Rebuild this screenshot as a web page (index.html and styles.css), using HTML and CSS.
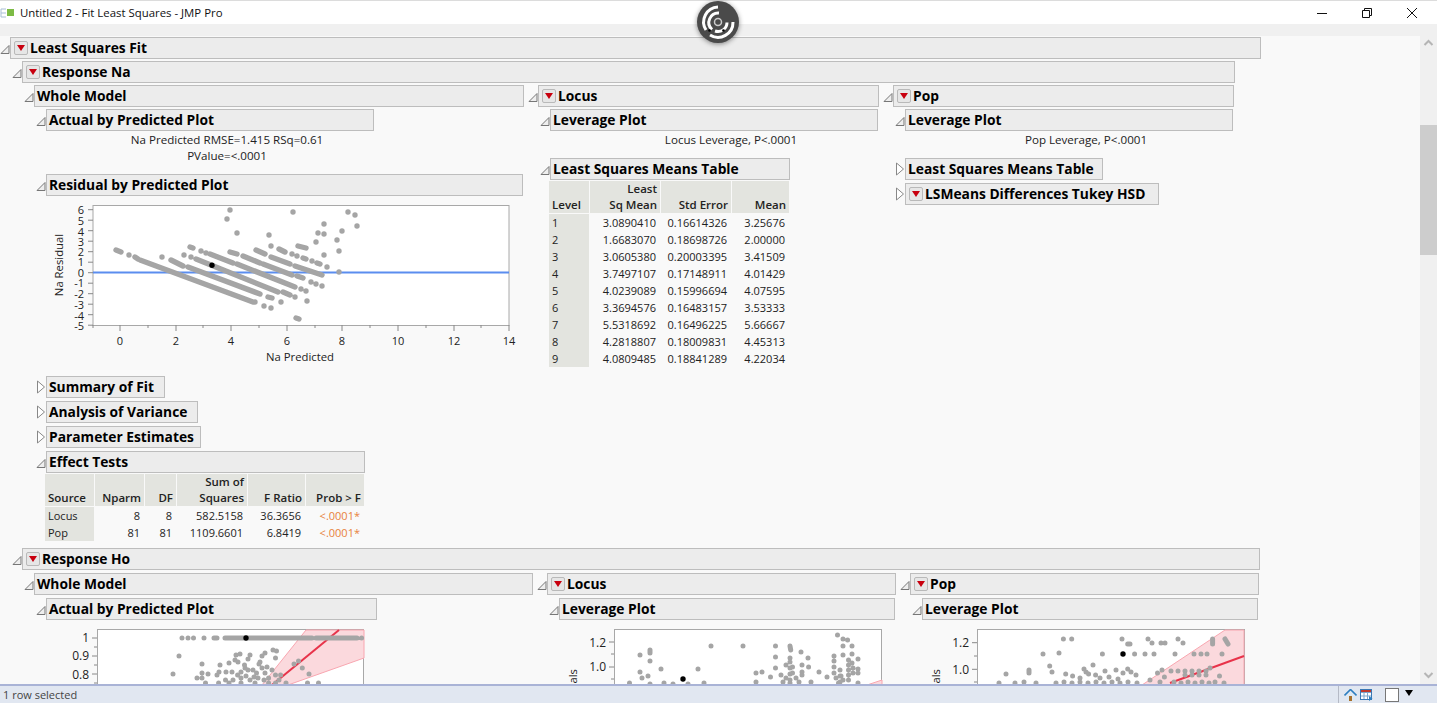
FILE: index.html
```html
<!DOCTYPE html>
<html lang="en">
<head>
    <meta charset="UTF-8">
    <meta name="viewport" content="width=device-width, initial-scale=1.0">
    <title>Untitled 2 - Fit Least Squares - JMP Pro</title>
    <link rel="stylesheet" href="styles.css">
</head>
<body>

    <svg class="defs" width="0" height="0">
        <symbol id="tw-open" viewBox="0 0 10 10">
            <path d="M1 9.5 L9 1.5 V9.5 Z" fill="#eee" stroke="#777"/>
        </symbol>
        <symbol id="tw-closed" viewBox="0 0 10 14">
            <path d="M1.5 1 L8.5 7 L1.5 13 Z" fill="#fff" stroke="#888"/>
        </symbol>
    </svg>

    <header class="titlebar">
        <svg class="app-icon" width="16" height="12" viewBox="0 0 16 12">
            <path d="M1 2h5M1 6h5M1 10h5M1 2v8" fill="none" stroke="#a9bfd6"/>
            <rect x="7" y="2" width="7" height="7" fill="#7dbb45"/>
        </svg>
        <span class="title-text">Untitled 2 - Fit Least Squares - JMP Pro</span>
        <div class="win-controls">
            <svg width="12" height="12" viewBox="0 0 12 12"><path d="M1 6.500h10" stroke="#111"/></svg>
            <svg width="12" height="12" viewBox="0 0 12 12"><path d="M1.500 3.500h7v7h-7zM3.500 3.500v-2h7v7h-2" fill="none" stroke="#111"/></svg>
            <svg width="12" height="12" viewBox="0 0 12 12"><path d="M1 1l10 10M11 1L1 11" stroke="#111"/></svg>
        </div>
    </header>
    <div class="toolstrip"></div>

    <!-- Floating recorder button -->
    <div class="recorder">
        <svg width="42" height="42" viewBox="0 0 42 42">
            <g fill="none" stroke="#fff" stroke-width="3">
                <path d="M21 6A15 15 0 0 0 9 29"/>
                <path d="M36 21A15 15 0 0 1 13 34"/>
                <path d="M22 12A9.500 9.500 0 0 0 15 28.500"/>
                <path d="M30 21.500A9 9 0 0 1 18 30"/>
            </g>
            <circle cx="21" cy="21" r="3.500" fill="none" stroke="#ccc" stroke-width="1.500"/>
            <circle cx="12.500" cy="29.500" r="1.300" fill="#000"/>
            <circle cx="26.500" cy="29.500" r="1.300" fill="#000"/>
        </svg>
    </div>

    <div class="main">
        <div class="report">

            <div class="node">
                <div class="hdr">
                    <svg class="twisty"><use href="#tw-open"/></svg>
                    <div class="box w-fit"><span class="menu"></span>Least Squares Fit</div>
                </div>
                <div class="body">

                    <!-- Response Na -->
                    <div class="node">
                        <div class="hdr">
                            <svg class="twisty"><use href="#tw-open"/></svg>
                            <div class="box w-resp-na"><span class="menu"></span>Response Na</div>
                        </div>
                        <div class="body columns">

                            <div class="node col-whole-na">
                                <div class="hdr">
                                    <svg class="twisty"><use href="#tw-open"/></svg>
                                    <div class="box w-full">Whole Model</div>
                                </div>
                                <div class="body">
                                    <div class="node">
                                        <div class="hdr">
                                            <svg class="twisty"><use href="#tw-open"/></svg>
                                            <div class="box w-328">Actual by Predicted Plot</div>
                                        </div>
                                        <div class="caption">Na Predicted RMSE=1.415 RSq=0.61<br>PValue=&lt;.0001</div>
                                    </div>
                                    <div class="node">
                                        <div class="hdr">
                                            <svg class="twisty"><use href="#tw-open"/></svg>
                                            <div class="box w-477">Residual by Predicted Plot</div>
                                        </div>
                                        <svg class="plot-residual" width="487" height="176" viewBox="36 198 487 176">
                                            <rect x="93" y="205.500" width="416" height="120" fill="#fff" stroke="#a8a8a8"/>
                                            <path class="ticks" d="M88 209.700h5M88 220.200h5M88 230.700h5M88 241.200h5M88 251.700h5M88 262.200h5M88 272.700h5M88 283.200h5M88 293.700h5M88 304.200h5M88 314.700h5M88 325.200h5M93 325v3M120 325v6M148 325v3M176 325v6M203 325v3M231 325v6M259 325v3M287 325v6M315 325v3M342 325v6M370 325v3M398 325v6M426 325v3M454 325v6M481 325v3M509 325v6"/>
                                            <g class="axis-num">
                                                <text x="84" y="213.500">6</text><text x="84" y="225">5</text><text x="84" y="235.500">4</text><text x="84" y="246">3</text><text x="84" y="256">2</text><text x="84" y="266">1</text><text x="84" y="277">0</text><text x="84" y="287">-1</text><text x="84" y="298">-2</text><text x="84" y="309">-3</text><text x="84" y="319.500">-4</text><text x="84" y="329.500">-5</text>
                                            </g>
                                            <g class="axis-num mid">
                                                <text x="120" y="345">0</text><text x="176" y="345">2</text><text x="231" y="345">4</text><text x="287" y="345">6</text><text x="342" y="345">8</text><text x="398" y="345">10</text><text x="454" y="345">12</text><text x="509" y="345">14</text>
                                            </g>
                                            <text class="axis-title mid" x="300" y="361">Na Predicted</text>
                                            <text class="axis-title mid" transform="translate(63 265) rotate(-90)">Na Residual</text>
                                            <path d="M93 272.500H509" stroke="#5b8def" stroke-width="2"/>
                                            <path class="dots" d="M230 210h0M227 219h0M237 233h0M293 212h0M348 212h0M355 215h0M357 226h0M324 224h0M318 233h0M324 234h0M342 231h0M337 240h0M316 242h0M269 235h0M271 246h0M339 251h0M324 255h0M327 267h0M339 272h0M322 286h0M311 282h0M316 284h0M307 301h0M281 302h0M271 308h0M264 306h0M296 318L299 319M295 297h0M116 250L121 252M129 255h0M135 257L138 259M140 260L253 302M255 302h0M162 257h0M171 260L183 266M188 267L260 294M268 297L272 298M184 255h0M191 257h0M196 259L278 292M283 292L290 295M190 247L193 248M201 251h0M206 253h0M210 254L233 263M237 264L295 287M301 289h0M306 291h0M230 252L237 254M243 256L260 263M263 264L292 275M297 276L303 278M256 250L265 254M271 257L290 264M295 266L322 275M279 249L285 252M292 254h0M297 256h0M303 258L306 259M312 261h0M317 263L320 264M298 246L306 248"/>
                                            <circle cx="212" cy="265.300" r="2.700" fill="#000"/>
                                        </svg>
                                    </div>
                                    <div class="node closed">
                                        <div class="hdr">
                                            <svg class="twisty tall"><use href="#tw-closed"/></svg>
                                            <div class="box w-119">Summary of Fit</div>
                                        </div>
                                    </div>
                                    <div class="node closed">
                                        <div class="hdr">
                                            <svg class="twisty tall"><use href="#tw-closed"/></svg>
                                            <div class="box w-152">Analysis of Variance</div>
                                        </div>
                                    </div>
                                    <div class="node closed">
                                        <div class="hdr">
                                            <svg class="twisty tall"><use href="#tw-closed"/></svg>
                                            <div class="box w-155">Parameter Estimates</div>
                                        </div>
                                    </div>
                                    <div class="node">
                                        <div class="hdr">
                                            <svg class="twisty"><use href="#tw-open"/></svg>
                                            <div class="box w-319">Effect Tests</div>
                                        </div>
                                        <table class="report-table effect">
                                            <thead>
                                                <tr><th>Source</th><th>Nparm</th><th>DF</th><th>Sum of<br>Squares</th><th>F Ratio</th><th>Prob &gt; F</th></tr>
                                            </thead>
                                            <tbody>
                                                <tr><th>Locus</th><td>8</td><td>8</td><td>582.5158</td><td>36.3656</td><td class="sig">&lt;.0001*</td></tr>
                                                <tr><th>Pop</th><td>81</td><td>81</td><td>1109.6601</td><td>6.8419</td><td class="sig">&lt;.0001*</td></tr>
                                            </tbody>
                                        </table>
                                    </div>
                                </div>
                            </div>

                            <div class="node col-effect-na">
                                <div class="hdr">
                                    <svg class="twisty"><use href="#tw-open"/></svg>
                                    <div class="box w-full"><span class="menu"></span>Locus</div>
                                </div>
                                <div class="body">
                                    <div class="node">
                                        <div class="hdr">
                                            <svg class="twisty"><use href="#tw-open"/></svg>
                                            <div class="box w-328">Leverage Plot</div>
                                        </div>
                                        <div class="caption">Locus Leverage, P&lt;.0001</div>
                                    </div>
                                    <div class="node">
                                        <div class="hdr">
                                            <svg class="twisty"><use href="#tw-open"/></svg>
                                            <div class="box w-240">Least Squares Means Table</div>
                                        </div>
                                        <table class="report-table lsmeans">
                                            <thead>
                                                <tr><th>Level</th><th>Least<br>Sq Mean</th><th>Std Error</th><th>Mean</th></tr>
                                            </thead>
                                            <tbody>
                                                <tr><th>1</th><td>3.0890410</td><td>0.16614326</td><td>3.25676</td></tr>
                                                <tr><th>2</th><td>1.6683070</td><td>0.18698726</td><td>2.00000</td></tr>
                                                <tr><th>3</th><td>3.0605380</td><td>0.20003395</td><td>3.41509</td></tr>
                                                <tr><th>4</th><td>3.7497107</td><td>0.17148911</td><td>4.01429</td></tr>
                                                <tr><th>5</th><td>4.0239089</td><td>0.15996694</td><td>4.07595</td></tr>
                                                <tr><th>6</th><td>3.3694576</td><td>0.16483157</td><td>3.53333</td></tr>
                                                <tr><th>7</th><td>5.5318692</td><td>0.16496225</td><td>5.66667</td></tr>
                                                <tr><th>8</th><td>4.2818807</td><td>0.18009831</td><td>4.45313</td></tr>
                                                <tr><th>9</th><td>4.0809485</td><td>0.18841289</td><td>4.22034</td></tr>
                                            </tbody>
                                        </table>
                                    </div>
                                </div>
                            </div>

                            <div class="node col-effect-na">
                                <div class="hdr">
                                    <svg class="twisty"><use href="#tw-open"/></svg>
                                    <div class="box w-full"><span class="menu"></span>Pop</div>
                                </div>
                                <div class="body">
                                    <div class="node">
                                        <div class="hdr">
                                            <svg class="twisty"><use href="#tw-open"/></svg>
                                            <div class="box w-328">Leverage Plot</div>
                                        </div>
                                        <div class="caption">Pop Leverage, P&lt;.0001</div>
                                    </div>
                                    <div class="node closed">
                                        <div class="hdr">
                                            <svg class="twisty tall"><use href="#tw-closed"/></svg>
                                            <div class="box w-198">Least Squares Means Table</div>
                                        </div>
                                    </div>
                                    <div class="node closed">
                                        <div class="hdr">
                                            <svg class="twisty tall"><use href="#tw-closed"/></svg>
                                            <div class="box w-254"><span class="menu"></span>LSMeans Differences Tukey HSD</div>
                                        </div>
                                    </div>
                                </div>
                            </div>

                        </div>
                    </div>

                    <!-- Response Ho -->
                    <div class="node resp-ho">
                        <div class="hdr">
                            <svg class="twisty"><use href="#tw-open"/></svg>
                            <div class="box w-resp-ho"><span class="menu"></span>Response Ho</div>
                        </div>
                        <div class="body columns">

                            <div class="node col-whole-ho">
                                <div class="hdr">
                                    <svg class="twisty"><use href="#tw-open"/></svg>
                                    <div class="box w-full">Whole Model</div>
                                </div>
                                <div class="body">
                                    <div class="hdr">
                                        <svg class="twisty"><use href="#tw-open"/></svg>
                                        <div class="box w-331">Actual by Predicted Plot</div>
                                    </div>
                                    <svg class="plot-ho" width="497" height="70" viewBox="36 623 497 70">
                                        <rect x="97.500" y="629.500" width="266" height="70" fill="#fff" stroke="#a8a8a8"/>
                                        <path class="ticks" d="M92 638h5M94 647h3M92 656h5M94 665h3M92 674h5M94 683h3"/>
                                        <g class="axis-num big">
                                            <text x="89" y="642">1</text><text x="89" y="660">0.9</text><text x="89" y="679">0.8</text>
                                        </g>
                                        <path d="M262 685L306 630H364V658L288 685Z" fill="#fbd9dd" stroke="#f8a6b0"/>
                                        <path d="M339 630L272 685" stroke="#e8334a" stroke-width="2"/>
                                        <path class="dots thin" d="M182 638h0M188 638h0M193.500 638h0M204 638h0M214 638L217 638M225 638L312 638M316 638L357 638M361.600 638h0M179 656h0M173 674h0M202 664h0M202 673h0M208 674h0M197 678h0M202 678h0M205.500 683h0M236 655h0M240 654h0M250 655h0M235 660h0M248 659h0M265 653h0M262 656h0M273 650h0M276.500 651h0M275.500 658h0M260 662h0M259 664h0M229 663h0M238 662h0M244.500 665h0M220 665h0M219 672h0M217 675h0M232 672h0M237.600 675h0M248 670h0M253 670h0M256.500 673h0M267 667h0M272 670h0M265 673h0M275.500 675h0M280.600 675h0M225.500 680h0M241 678h0M250 680h0M258 678h0M268.600 678h0M279 680h0M218.600 683h0M229 683h0M241 683h0M255 683h0M268.600 683h0M275.500 683h0M286 683h0M294 664h0M298.500 661h0M302.300 668h0M309 674h0M307.500 683h0M318.500 683h0M245 668h0M241 672h0M262 668h0M226 672h0M246 676h0M254 677h0M264 680h0M233 680h0"/>
                                        <circle cx="246" cy="638" r="2.700" fill="#000"/>
                                    </svg>
                                </div>
                            </div>

                            <div class="node col-effect-ho">
                                <div class="hdr">
                                    <svg class="twisty"><use href="#tw-open"/></svg>
                                    <div class="box w-full"><span class="menu"></span>Locus</div>
                                </div>
                                <div class="body">
                                    <div class="hdr">
                                        <svg class="twisty"><use href="#tw-open"/></svg>
                                        <div class="box w-336">Leverage Plot</div>
                                    </div>
                                    <svg class="plot-ho" width="347" height="70" viewBox="549 623 347 70">
                                        <rect x="614.500" y="629.500" width="267" height="70" fill="#fff" stroke="#a8a8a8"/>
                                        <path class="ticks" d="M609 642h5M611 654h3M609 667h5M611 679h3"/>
                                        <g class="axis-num big">
                                            <text x="606" y="646.500">1.2</text><text x="606" y="671">1.0</text>
                                        </g>
                                        <text class="axis-title" transform="translate(577 669) rotate(-90)" text-anchor="end">Ho Leverage Residuals</text>
                                        <path d="M867 685L882 680V685Z" fill="#fbd9dd" stroke="#f8a6b0"/>
                                        <path class="dots thin" d="M640 655h0M650 650L650 653M650 661h0M661 669h0M640 672h0M648 676h0M642 678h0M698 669h0M711 646h0M743 646h0M775.500 646h0M775.500 657h0M790 646L790.700 650M801 652h0M790 658h0M808 658h0M786 665h0M792.500 667h0M802 665h0M808.600 667h0M775.500 668h0M762 672h0M756 673h0M756 682h0M770.500 677h0M781 675h0M792.500 673h0M802 675h0M819 672h0M827 677h0M837.500 635h0M843 639h0M847.600 640h0M843 646h0M852 646h0M834 656h0M843 655h0M852 654h0M834 661h0M858 659h0M848.500 660h0M848.500 665h0M848.500 670h0M848.500 675h0M848.500 680h0M852 663h0M853 668h0M853 673h0M834 667h0M858 669h0M858 673h0M834 673h0M841 676h0M836 678h0M843 680h0M858 683h0M838.500 683h0M783 682h0M790 683h0M799 682h0M811 682h0M629.500 683h0M650 684h0M664 683h0M673 684h0M688 684h0M704 683h0M790 662h0M790 668h0M790 674h0M790 680h0M802 672h0M786 678h0M796 678h0M840 670h0M840 676h0M840 682h0"/>
                                        <circle cx="683" cy="679" r="2.700" fill="#000"/>
                                    </svg>
                                </div>
                            </div>

                            <div class="node col-effect-ho">
                                <div class="hdr">
                                    <svg class="twisty"><use href="#tw-open"/></svg>
                                    <div class="box w-full"><span class="menu"></span>Pop</div>
                                </div>
                                <div class="body">
                                    <div class="hdr">
                                        <svg class="twisty"><use href="#tw-open"/></svg>
                                        <div class="box w-336">Leverage Plot</div>
                                    </div>
                                    <svg class="plot-ho" width="347" height="70" viewBox="912 623 347 70">
                                        <rect x="977.500" y="629.500" width="267" height="70" fill="#fff" stroke="#a8a8a8"/>
                                        <path class="ticks" d="M972 642.700h5M974 656h3M972 669.300h5M974 682h3"/>
                                        <g class="axis-num big">
                                            <text x="969" y="647">1.2</text><text x="969" y="674">1.0</text>
                                        </g>
                                        <text class="axis-title" transform="translate(940 669) rotate(-90)" text-anchor="end">Ho Leverage Residuals</text>
                                        <path d="M1142 685L1225 630H1244V685Z" fill="#fbd9dd" stroke="#f8a6b0"/>
                                        <path d="M1244 656L1170 683" stroke="#e8334a" stroke-width="2"/>
                                        <path class="dots thin" d="M1063.400 639h0M1071.700 639h0M1122 639h0M1127.700 644L1130 644M1148 639h0M1152 643h0M1161 643h0M1165 643h0M1178 639h0M1183 643h0M1212.600 639L1212.600 644M1225 639L1228 644M1043 654h0M1059 653h0M1102.400 654h0M1134.600 654h0M1145 654h0M1154 654h0M1175 654h0M1194 654h0M1201 654h0M1207 654h0M1222 654h0M1049.700 666h0M1052 672h0M1006 674h0M1029 670L1029 673M1065.700 674h0M1072.600 676h0M1093 665h0M1084 669h0M1086 672h0M1088.600 674h0M1095.600 675h0M1105 671h0M1116 670h0M1109 677h0M1127.700 669h0M1131 672h0M1136 675h0M1123 673h0M1162 670h0M1157.500 673h0M1164.400 677h0M1171 671h0M1178 671h0M1185 671h0M1192 671h0M1199 671h0M1206 671h0M1185 675h0M1192 675h0M1199 675h0M1206 675h0M1210 668h0M1219.500 676h0M999 683h0M1015 683h0M1024 682h0M1036 683h0M1056 683h0M1064 682h0M1072 683h0M1080 682h0M1088 683h0M1096 682h0M1104 683h0M1112 682h0M1120 683h0M1128 682h0M1137 683h0M1174 682h0M1181 683h0M1188 682h0M1195 683h0M1202 682h0M1209 683h0M1215 682h0M1224 683h0M1080 678h0M1100 678h0M1118 679h0M1150 680h0M1160 682h0"/>
                                        <circle cx="1123" cy="654" r="2.700" fill="#000"/>
                                    </svg>
                                </div>
                            </div>

                        </div>
                    </div>

                </div>
            </div>

        </div>

        <div class="scrollbar">
            <svg width="17" height="10" viewBox="0 0 17 10"><path d="M4.500 7L8.500 3L12.500 7" fill="none" stroke="#b5b5b5" stroke-width="2"/></svg>
            <div class="scroll-track"><div class="scroll-thumb"></div></div>
            <svg width="17" height="10" viewBox="0 0 17 10"><path d="M4.500 3L8.500 7L12.500 3" fill="none" stroke="#b5b5b5" stroke-width="2"/></svg>
        </div>
    </div>

    <footer class="statusbar">
        <span class="status-text">1 row selected</span>
        <div class="status-tools">
            <svg width="13" height="12" viewBox="0 0 13 12">
                <path d="M2.500 6.500L6.500 2.500L10.500 6.500V12H2.500Z" fill="#dfeaf3"/>
                <path d="M0.500 6.500L6.500 0.500L12.500 6.500" fill="none" stroke="#2d7fc1" stroke-width="1.600"/>
                <rect x="5" y="7" width="3" height="5" fill="#a8702c"/>
            </svg>
            <svg width="13" height="12" viewBox="0 0 13 12">
                <rect x="0.500" y="0.500" width="11" height="10" fill="#fff" stroke="#3a78b5"/>
                <path d="M1 3.500h10M4 1v9M7.500 1v9M1 7h10" stroke="#7fa6cc"/>
                <path d="M1 1h10v2H1z" fill="#c0392b"/>
                <path d="M9 7l3.500 2.500-3.500 2.500z" fill="#2d7fc1"/>
            </svg>
            <span class="color-swatch"></span>
            <span class="swatch-arrow"></span>
        </div>
    </footer>

</body>
</html>
```

FILE: styles.css
```css
* {
    box-sizing: border-box;
}

html, body {
    height: 100%;
}

body {
    margin: 0;
    display: flex;
    flex-direction: column;
    height: 100vh;
    overflow: hidden;
    font-family: "Open Sans", "Noto Sans", sans-serif;
    font-size: 11px;
    color: #222;
    background-color: #f9f9f9;
}

.defs {
    position: absolute;
}

/* Window chrome */
.titlebar {
    height: 24px;
    flex: none;
    display: flex;
    align-items: center;
    background-color: #fff;
    border-top: 1px solid #dcdcdc;
}

.app-icon {
    flex: none;
    margin-right: 4px;
}

.title-text {
    font-size: 11.400px;
    color: #111;
}

.win-controls {
    margin-left: auto;
    margin-right: 19px;
    display: flex;
    gap: 33px;
}

.toolstrip {
    height: 11px;
    flex: none;
    background-color: #f0f0f0;
}

.recorder {
    position: absolute;
    left: 697px;
    top: 1px;
    width: 42px;
    height: 42px;
    border-radius: 50%;
    background-color: #4a4a4a;
    box-shadow: 0 1px 5px rgba(0, 0, 0, 0.45);
}

.main {
    flex: 1;
    min-height: 0;
    display: flex;
}

.report {
    flex: 1;
    min-width: 0;
    overflow: hidden;
    padding-top: 1px;
    border-top: 1px solid #f0f0f0;
}

.scrollbar {
    width: 17px;
    flex: none;
    display: flex;
    flex-direction: column;
    background-color: #f0f0f0;
    padding-top: 3px;
    padding-bottom: 4px;
}

.scroll-track {
    flex: 1;
    padding-top: 77px;
}

.scroll-thumb {
    height: 130px;
    background-color: #cdcdcd;
}

.statusbar {
    height: 19px;
    flex: none;
    display: flex;
    align-items: center;
    justify-content: space-between;
    background-color: #e1e7f1;
    border-top: 2px solid #a9b3d6;
}

.status-text {
    padding-left: 3px;
    font-size: 11px;
    color: #444;
}

.status-tools {
    align-self: stretch;
    width: 99px;
    display: flex;
    align-items: center;
    gap: 3px;
    padding-left: 5px;
    border-left: 1px solid #b5bac6;
}

.color-swatch {
    width: 14px;
    height: 14px;
    margin-left: 9px;
    background-color: #fff;
    border: 1px solid #777;
}

.swatch-arrow {
    margin-left: 3px;
    margin-bottom: 4px;
    border-left: 4px solid transparent;
    border-right: 4px solid transparent;
    border-top: 6px solid #000;
}

/* Report outline */
.hdr {
    display: flex;
    align-items: center;
    margin-bottom: 2px;
}

.twisty {
    width: 10px;
    height: 10px;
    flex: none;
    margin-top: 2px;
}

.twisty.tall {
    height: 14px;
    margin-top: -1px;
}

.box {
    height: 22px;
    flex: none;
    display: flex;
    align-items: center;
    gap: 2px;
    padding-left: 2px;
    padding-bottom: 2px;
    background-color: #ececec;
    border: 1px solid #bdbdbd;
    font-size: 13.800px;
    font-weight: 700;
    color: #000;
    white-space: nowrap;
}

.menu {
    position: relative;
    width: 14px;
    height: 14px;
    flex: none;
    margin-left: 1px;
    margin-top: 2px;
    background-color: #e6e6e6;
    border: 1px solid #b9b9b9;
    border-radius: 2px;
}

.menu::after {
    content: "";
    position: absolute;
    left: 2px;
    top: 3px;
    border-left: 4px solid transparent;
    border-right: 4px solid transparent;
    border-top: 6px solid #c8000f;
}

.body {
    padding-left: 12px;
}

.columns {
    display: flex;
    align-items: flex-start;
    gap: 4px;
}

.closed .hdr {
    margin-bottom: 3px;
}

.resp-ho {
    margin-top: 7px;
}

.resp-ho .hdr {
    margin-bottom: 3px;
}

.col-whole-na {
    width: 500px;
    flex: none;
}

.col-effect-na {
    width: 351px;
    flex: none;
}

.col-whole-ho {
    width: 509px;
    flex: none;
}

.col-effect-ho {
    width: 359px;
    flex: none;
}

.w-fit { width: 1251px; }
.w-resp-na { width: 1213px; }
.w-resp-ho { width: 1238px; }
.w-full { flex: 1; }
.w-477 { width: 477px; }
.w-336 { width: 336px; }
.w-331 { width: 331px; }
.w-328 { width: 328px; }
.w-319 { width: 319px; }
.w-254 { width: 254px; }
.w-240 { width: 240px; }
.w-198 { width: 198px; }
.w-155 { width: 155px; }
.w-152 { width: 152px; }
.w-119 { width: 119px; }

.caption {
    width: 328px;
    margin-left: 10px;
    margin-top: -1px;
    padding-left: 34px;
    padding-bottom: 10px;
    font-size: 11.600px;
    line-height: 16px;
    text-align: center;
    color: #222;
}

/* Tables */
.report-table {
    border-collapse: separate;
    border-spacing: 0;
    margin-top: -1px;
    margin-left: 9px;
    table-layout: fixed;
    font-size: 11px;
    line-height: 16px;
}

.report-table thead th {
    padding: 0 3px;
    vertical-align: bottom;
    text-align: right;
    font-size: 11.500px;
    font-weight: 600;
    color: #222;
    background-color: #e3e4df;
    border-right: 1px solid #f9f9f9;
    border-bottom: 1px solid #f9f9f9;
    white-space: nowrap;
}

.report-table thead th:first-child,
.report-table tbody th {
    text-align: left;
}

.report-table thead th:last-child {
    border-right: none;
}

.report-table tbody th {
    height: 17px;
    padding: 1px 3px 0;
    font-weight: 400;
    background-color: #e3e4df;
    border-right: 1px solid #f9f9f9;
}

.report-table td {
    height: 17px;
    padding: 1px 5px 0 3px;
    text-align: right;
    white-space: nowrap;
}

.report-table td:last-child {
    padding-right: 4px;
}

.lsmeans {
    width: 240px;
}

.lsmeans th:nth-child(1) { width: 41px; }
.lsmeans th:nth-child(2) { width: 71px; }
.lsmeans th:nth-child(3) { width: 71px; }
.lsmeans th:nth-child(4) { width: 57px; }

.effect {
    width: 319px;
}

.effect th:nth-child(1) { width: 50px; }
.effect th:nth-child(2) { width: 50px; }
.effect th:nth-child(3) { width: 32px; }
.effect th:nth-child(4) { width: 71px; }
.effect th:nth-child(5) { width: 58px; }
.effect th:nth-child(6) { width: 58px; }

.sig {
    color: #e8823c;
}

/* Plots */
.plot-residual,
.plot-ho {
    display: block;
    margin-bottom: 2px;
}

.ticks {
    fill: none;
    stroke: #888;
}

.dots {
    fill: none;
    stroke: #a5a5a5;
    stroke-width: 5.400;
    stroke-linecap: round;
}

.dots.thin {
    stroke-width: 5;
}

.axis-num {
    font-size: 11px;
    fill: #222;
    text-anchor: end;
}

.axis-num.big {
    font-size: 12px;
}

.axis-num.mid {
    text-anchor: middle;
}

.axis-title {
    font-size: 11.300px;
    fill: #222;
}

.axis-title.mid {
    text-anchor: middle;
}
```
